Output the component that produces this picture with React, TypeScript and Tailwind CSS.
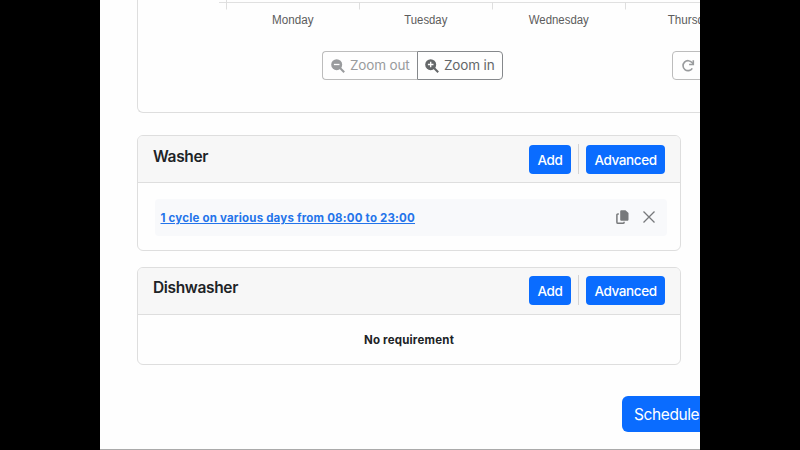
import type { ReactNode } from "react";

const days = [
  { name: "Monday", x: 192.8, width: 41.5 },
  { name: "Tuesday", x: 325.8, width: 43 },
  { name: "Wednesday", x: 458.8, width: 60 },
  { name: "Thursday", x: 592, width: 48.5 },
];

function Axis() {
  return (
    <svg className="block h-10 w-[600px] shrink-0" viewBox="0 0 600 40">
      <path d="M119 2.5H600" stroke="#e0e0e0" fill="none" />
      <path d="M126.5 0V9.5M259.5 2V9.5M392.5 2V9.5M525.5 2V9.5" stroke="#dedede" fill="none" />
      {days.map((d) => (
        <text key={d.name} x={d.x} y={23.5} textLength={d.width} lengthAdjust="spacingAndGlyphs" textAnchor="middle" fill="#5c5c5c" className="font-['Liberation_Sans',sans-serif] text-[12px]">
          {d.name}
        </text>
      ))}
    </svg>
  );
}

function ZoomIcon({ plus = false }: { plus?: boolean }) {
  return (
    <svg viewBox="0 0 14 14" className="size-3.5 shrink-0">
      <circle cx="5.7" cy="5.7" r="5.5" fill="currentColor" />
      <path d="M8.8 8.8L13.2 13.2" stroke="currentColor" strokeWidth="2" fill="none" />
      <path d={plus ? "M2.9 5.5H8.5M5.7 2.7V8.3" : "M2.9 5.5H8.5"} stroke="#fff" strokeWidth="1.3" />
    </svg>
  );
}

function CopyIcon() {
  return (
    <svg viewBox="0 0 13 15" className="h-[15px] w-[13px]">
      <path d="M5.5.3h4l3 2.700v6.500c0 .8-.5 1.300-1.300 1.300H5.500c-.8 0-1.300-.5-1.300-1.300V1.600C4.200.8 4.700.3 5.500.3Z" fill="#77797b" />
      <path d="M2.800 4H2C1.300 4 .900 4.400.900 5.100v7.100c0 .7.400 1.100 1.100 1.100h5c.7 0 1.100-.4 1.100-1.100v-.5" fill="none" stroke="#77797b" strokeWidth="1.5" />
    </svg>
  );
}

function Button({ children, className }: { children: ReactNode; className: string }) {
  return (
    <button className={`flex h-[29px] items-center justify-center rounded bg-[#0a6cff] pt-0.5 text-[13.5px] font-[450] tracking-[-0.4px] whitespace-nowrap text-white ${className}`}>
      {children}
    </button>
  );
}

interface CardProps {
  title: ReactNode;
  className: string;
  headerClassName: string;
  children: ReactNode;
}

function Card({ title, className, headerClassName, children }: CardProps) {
  return (
    <section className={`ml-[37px] flex w-[544px] shrink-0 flex-col overflow-hidden rounded-md border border-[#dedede] ${className}`}>
      <header className={`flex shrink-0 items-start border-b border-[#dedede] bg-[#f7f7f7] pr-[15px] pl-[15px] ${headerClassName}`}>
        <h2 className="mt-2.5 text-[15.5px] leading-[22px] font-semibold tracking-[-0.35px]">{title}</h2>
        <div className="mt-2 ml-auto flex h-[30px] items-center">
          <Button className="w-[42px]"><span>Add</span></Button>
          <div className="mr-[7px] ml-[7px] h-[30px] w-px bg-[#d4d4d4]" />
          <Button className="w-[79px]"><span>Advanced</span></Button>
        </div>
      </header>
      {children}
    </section>
  );
}

export default function App() {
  return (
    <div className="flex h-[450px] w-[800px] justify-center overflow-hidden bg-black font-[Inter,sans-serif] text-[#202326]">
      <main className="flex h-[450px] w-[600px] flex-col overflow-hidden border-b border-[#aaa] bg-[#fefefe]">
        <section className="h-[113px] shrink-0">
          <div className="ml-[37px] h-[113px] w-[600px] rounded-bl-md border-b border-l border-[#dedede]">
            <div className="-ml-[38px]"><Axis /></div>
            <div className="mt-[11px] flex pl-[184px]">
              <div className="flex h-[29px] w-[95px] shrink-0 items-center gap-[5px] rounded-l border border-r-0 border-[#bcbcbc] pl-2 text-[13.5px] whitespace-nowrap text-[#999b9d]">
                <ZoomIcon /><span className="tracking-[-0.15px]">Zoom out</span>
              </div>
              <div className="flex h-[29px] w-[86px] shrink-0 items-center gap-[5px] rounded-r border border-[#85888b] pl-[7px] text-[13.5px] whitespace-nowrap text-[#646769]">
                <ZoomIcon plus /><span className="tracking-[-0.15px]">Zoom in</span>
              </div>
              <div className="ml-[169px] flex h-[29px] w-20 shrink-0 items-center rounded border border-[#bcbcbc] pl-2 text-[#999b9d]">
                <svg viewBox="0 0 14 14" className="size-3.5">
                  <path d="M11.300 9.300A5 5 0 1 1 11 3.600L12.300 5" fill="none" stroke="currentColor" strokeWidth="1.6" />
                  <path d="M12.300 1.300V5.500H8.100" fill="none" stroke="currentColor" strokeWidth="1.6" />
                </svg>
              </div>
            </div>
          </div>
        </section>

        <Card title="Washer" className="mt-[22px] h-[116px]" headerClassName="h-[47px]">
          <div className="mt-4 mr-[13px] ml-[17px] flex h-[37px] items-center rounded bg-[#f8f9fb] pr-3 pl-[5.5px]">
            <a className="pt-0.5 text-[11.5px] font-bold tracking-[0.19px] whitespace-nowrap text-[#2474ea] underline">1 cycle on various days from 08:00 to 23:00</a>
            <div className="ml-auto flex items-center gap-[14px] pb-px">
              <CopyIcon />
              <svg viewBox="0 0 12 12" className="size-3"><path d="M.5.5L11.500 11.500M11.500.5L.5 11.500" stroke="#77797b" strokeWidth="1.3" /></svg>
            </div>
          </div>
        </Card>

        <Card title="Dishwasher" className="mt-4 h-[98px]" headerClassName="-mt-px h-12">
          <div className="flex flex-1 items-center justify-center pt-0.5 text-[11.5px] font-bold tracking-[0.2px]"><span>No requirement</span></div>
        </Card>

        <button className="mt-[31px] ml-[522px] flex h-9 w-[110px] shrink-0 items-center rounded-md bg-[#0a6cff] pt-0.5 pl-3 text-[15.5px] tracking-[-0.4px] whitespace-nowrap text-white">
          <span>Schedule</span>
        </button>
      </main>
    </div>
  );
}
